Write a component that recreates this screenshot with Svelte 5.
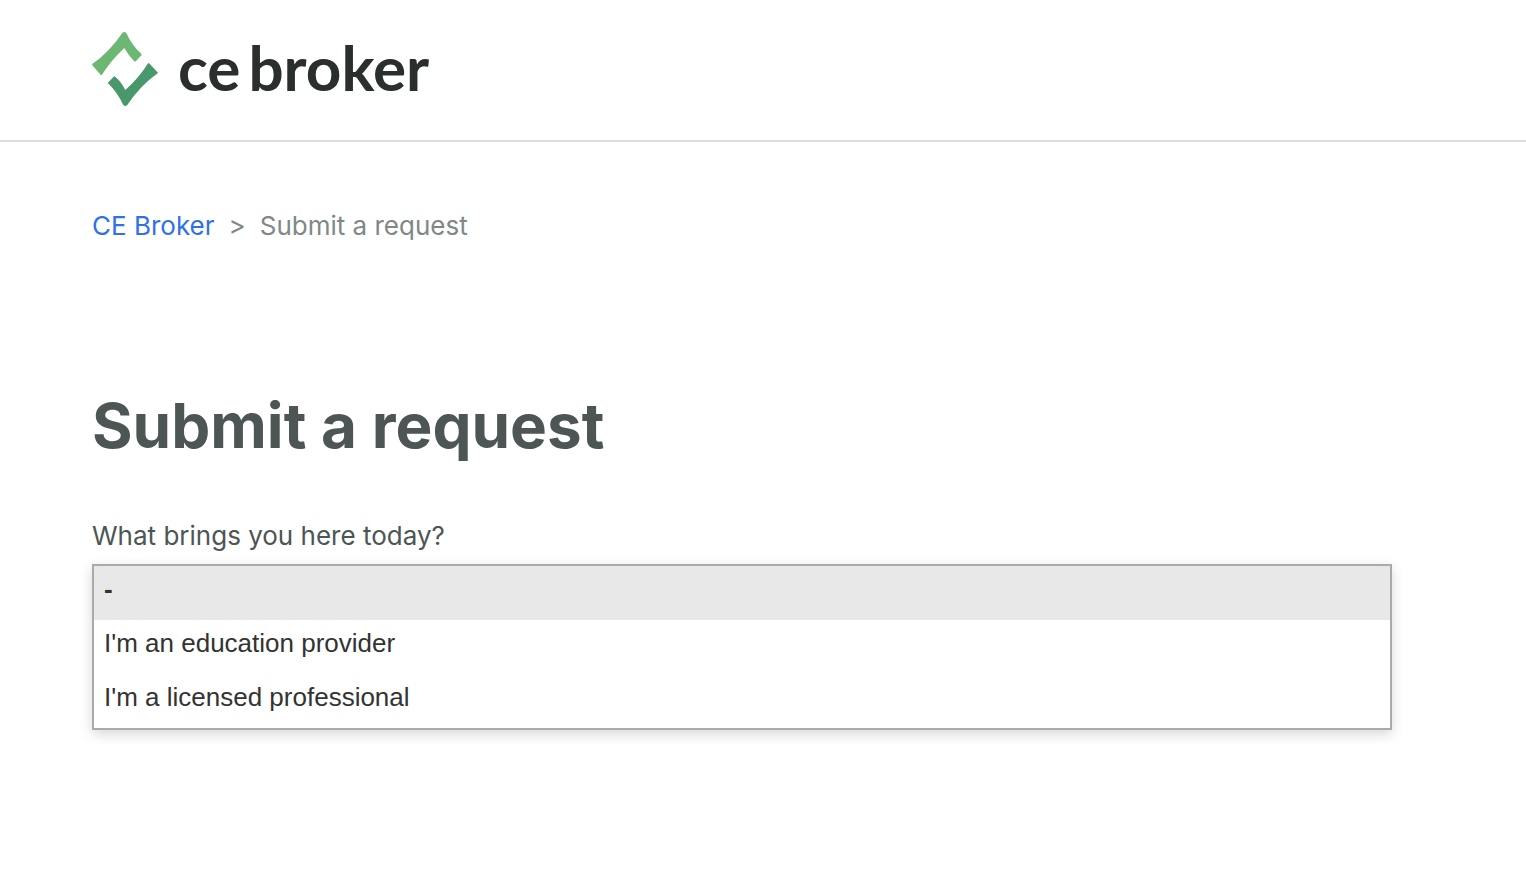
<script>
  const choices = ['-', "I'm an education provider", "I'm a licensed professional"];
  let reason = $state('-');
</script>

<header>
  <a class="brand" href="#home" aria-label="CE Broker home">
    <svg width="66" height="74" viewBox="0 0 66 74" aria-hidden="true">
      <path
        fill="#6cb873"
        d="M0.500 31.800Q17 20.500 30.300 1Q32.300 -1 34.300 1Q40 13.500 49.200 21.800Q50 22.700 49.200 23.500L43.800 29.200Q43 30 42.200 29.200Q36.500 23.500 32.300 16Q18.500 29 10 42.700Q9.300 43.600 8.600 42.800L0.500 33.400Q-0.300 32.600 0.500 31.800Z"
      />
      <path
        fill="#48986c"
        d="M16.400 50.200L21.600 44.800Q22.400 44 23.200 44.700Q29.500 50 33.300 58Q46.500 46.500 55.900 31.600Q56.600 30.500 57.400 31.400L65.500 40.200Q66.200 41 65.300 41.600Q48.500 53.500 35.300 73Q33.300 75 31.300 73Q25.500 60.500 16.500 51.800Q15.700 51 16.400 50.200Z"
      />
    </svg>
    <span class="wordmark"><span>ce</span><span>broker</span></span>
  </a>
</header>

<main>
  <nav aria-label="Breadcrumb">
    <ol>
      <li><a href="#home">CE Broker</a></li>
      <li aria-current="page">Submit a request</li>
    </ol>
  </nav>

  <h1>Submit a request</h1>

  <form>
    <label for="reason">What brings you here today?</label>
    <select id="reason" size="3" bind:value={reason}>
      {#each choices as choice}
        <option value={choice}>{choice}</option>
      {/each}
    </select>
  </form>
</main>

<style>
  :global(body) {
    background: #fff;
    color: #4d5555;
    font-family: Inter, sans-serif;
    font-size: 26px;
    line-height: 40px;
  }

  header {
    display: flex;
    padding: 32px 92px 34px;
    border-bottom: 2px solid #ddd;
  }

  .brand {
    display: flex;
    align-items: center;
    gap: 20px;
    color: #2a2e2d;
    text-decoration: none;
  }

  .wordmark {
    display: flex;
    gap: 8px;
    font-family: Lato, sans-serif;
    font-size: 62px;
    font-weight: 700;
    line-height: 70px;
    padding-bottom: 4px;
  }

  main {
    padding: 64px 134px 64px 92px;
  }

  ol {
    display: flex;
    margin: 0;
    padding: 0;
    list-style: none;
    color: #7f8887;
  }

  li + li::before {
    content: '>';
    margin: 0 14px;
  }

  nav a {
    color: #3071e7;
    text-decoration: none;
  }

  h1 {
    margin: 140px 0 50px;
    font-size: 62px;
    font-weight: 700;
    line-height: 80px;
  }

  form {
    display: flex;
    flex-direction: column;
    gap: 8px;
  }

  select {
    box-sizing: border-box;
    width: 100%;
    padding: 0;
    overflow: hidden;
    border: 2px solid #aaa;
    border-radius: 0;
    outline: none;
    background: #fff;
    box-shadow: 0 4px 12px rgb(0 0 0 / 16%);
    font-family: 'Liberation Sans', sans-serif;
    font-size: 26px;
  }

  option {
    min-height: 32px;
    padding: 8px 10px 14px;
    color: #333;
    line-height: 32px;
  }

  option:checked {
    background: #e8e8e8 linear-gradient(#e8e8e8, #e8e8e8);
    color: #333;
    font-weight: 700;
  }
</style>
